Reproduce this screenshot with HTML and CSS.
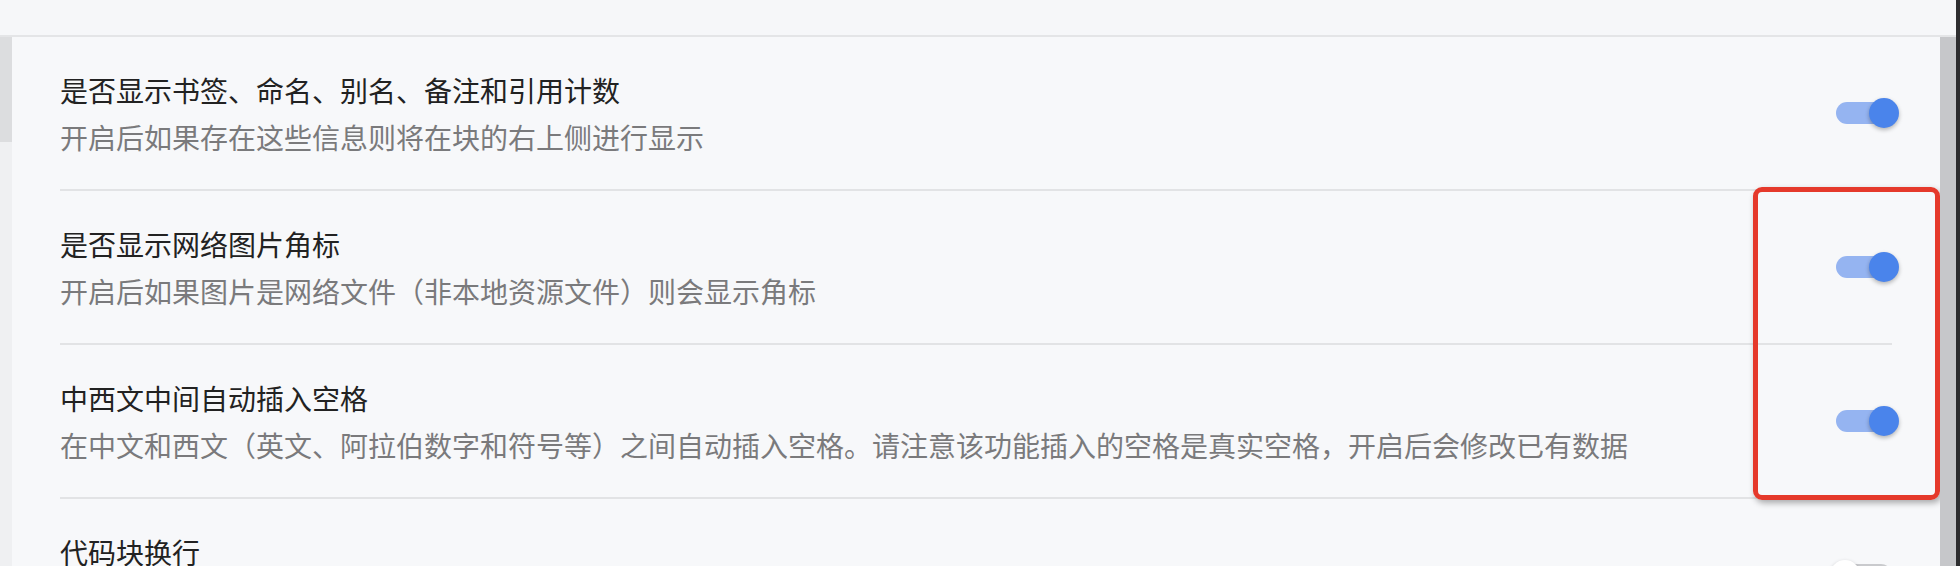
FILE: index.html
```html
<!DOCTYPE html>
<html lang="zh-CN">
<head>
<meta charset="utf-8">
<title>设置</title>
<link rel="stylesheet" href="styles.css">
</head>
<body>
<div class="screen">
  <div class="app">
    <div class="topbar"></div>
    <div class="main">
      <div class="side"><div class="side-thumb"></div></div>
      <div class="panel">
        <div class="row">
          <div class="text">
            <div class="title">是否显示书签、命名、别名、备注和引用计数</div>
            <div class="desc">开启后如果存在这些信息则将在块的右上侧进行显示</div>
          </div>
          <span class="switch on"><span class="knob"></span></span>
        </div>
        <div class="row">
          <div class="text">
            <div class="title">是否显示网络图片角标</div>
            <div class="desc">开启后如果图片是网络文件（非本地资源文件）则会显示角标</div>
          </div>
          <span class="switch on"><span class="knob"></span></span>
        </div>
        <div class="row">
          <div class="text">
            <div class="title">中西文中间自动插入空格</div>
            <div class="desc">在中文和西文（英文、阿拉伯数字和符号等）之间自动插入空格。请注意该功能插入的空格是真实空格，开启后会修改已有数据</div>
          </div>
          <span class="switch on"><span class="knob"></span></span>
        </div>
        <div class="row">
          <div class="text">
            <div class="title">代码块换行</div>
          </div>
          <span class="switch"><span class="knob"></span></span>
        </div>
        <div class="highlight"></div>
      </div>
      <div class="scrollbar"></div>
    </div>
  </div>
  <div class="edge"></div>
</div>
</body>
</html>
```

FILE: styles.css
```css
html, body {
  margin: 0;
  padding: 0;
  height: 566px;
  overflow: hidden;
  background: #f7f8fa;
  font-family: "Noto Sans CJK SC", "Noto Sans", sans-serif;
}

.screen {
  display: flex;
  height: 566px;
}

.app {
  flex: 1;
  display: flex;
  flex-direction: column;
  min-width: 0;
}

.topbar {
  height: 35px;
  flex: none;
  background: #f6f7f9;
  border-bottom: 2px solid #e4e5e7;
}

.main {
  flex: 1;
  display: flex;
  min-height: 0;
}

.side {
  width: 12px;
  flex: none;
  background: #eff0f2;
}

.side-thumb {
  height: 105px;
  background: #dcdddf;
}

.panel {
  flex: 1;
  position: relative;
  padding: 0 48px;
  background: #f7f8fa;
  overflow: hidden;
}

.row {
  display: flex;
  align-items: center;
  justify-content: space-between;
  height: 152px;
  border-bottom: 2px solid #e2e3e5;
  box-sizing: content-box;
}

.text {
  padding-top: 33px;
  align-self: flex-start;
}

.title {
  font-size: 28px;
  line-height: 40px;
  color: #222222;
}

.desc {
  margin-top: 7px;
  font-size: 28px;
  line-height: 40px;
  color: #7a7a7c;
}

.switch {
  position: relative;
  width: 56px;
  height: 22px;
  border-radius: 11px;
  background: #c9cacd;
  flex: none;
}

.switch.on {
  background: #95b4f1;
}

.knob {
  position: absolute;
  top: -4px;
  left: -6px;
  width: 30px;
  height: 30px;
  border-radius: 50%;
  background: #ffffff;
  box-shadow: 0 2px 4px rgba(0, 0, 0, 0.28);
}

.switch.on .knob {
  left: auto;
  right: -7px;
  background: #4a84eb;
}

.highlight {
  position: absolute;
  left: 1741px;
  top: 150px;
  width: 177px;
  height: 303px;
  border: 5px solid #e5392b;
  border-radius: 9px;
  box-shadow: 2px 3px 6px rgba(0, 0, 0, 0.32);
}

.scrollbar {
  width: 16px;
  flex: none;
  background: #c6c7ca;
}

.edge {
  width: 4px;
  flex: none;
  background: #2e2e30;
}
```
